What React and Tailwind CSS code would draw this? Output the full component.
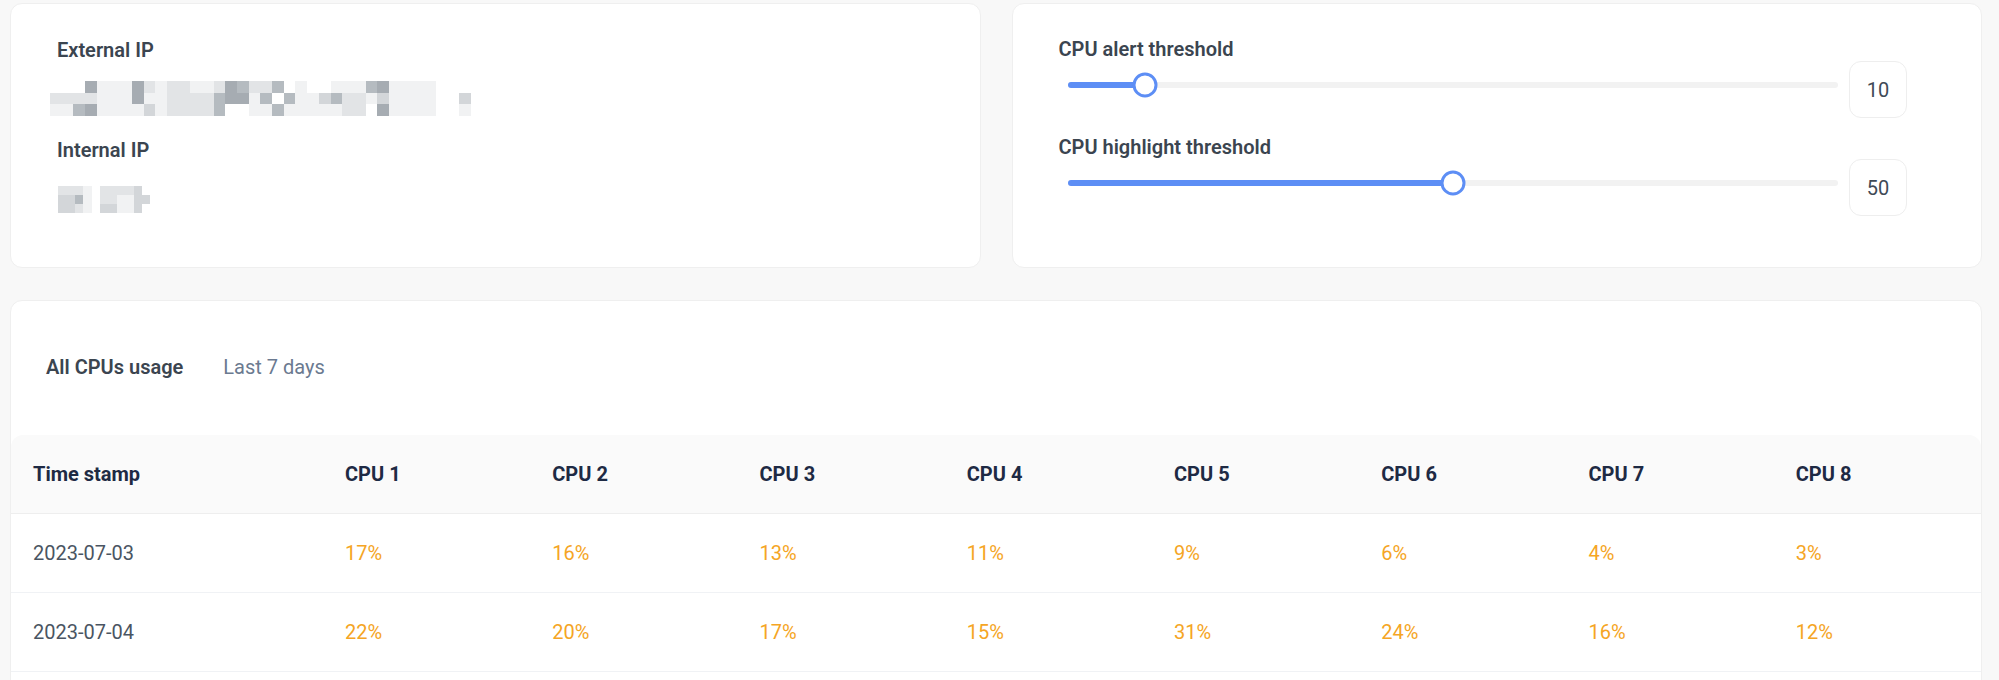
import React from 'react';

const shades = {
  0: 'bg-transparent',
  1: 'bg-[#f1f2f3]',
  2: 'bg-[#e2e4e6]',
  3: 'bg-[#d3d6d9]',
  4: 'bg-[#b5bbc0]',
  5: 'bg-[#a6acb2]',
};

// pixelated (redacted) addresses
const externalMosaic = [
  '000511152122112542240100111451111000',
  '222211151122224551404113422131111003',
  '114511113122224001141111122051111001',
];

const internalMosaic = ['22210222230', '33410221133', '33210331130'];

const rows = [
  { date: '2023-07-03', values: [17, 16, 13, 11, 9, 6, 4, 3] },
  { date: '2023-07-04', values: [22, 20, 17, 15, 31, 24, 16, 12] },
];

function Mosaic({ pattern, cell }) {
  return (
    <div className="flex flex-col">
      {pattern.map((row, r) => (
        <div key={r} className="flex">
          {row.split('').map((c, i) => (
            <div key={i} className={`${cell} ${shades[c]}`} />
          ))}
        </div>
      ))}
    </div>
  );
}

function Slider({ label, value }) {
  return (
    <div>
      <div className="text-[20px] leading-6 font-semibold text-[#3b4550]">{label}</div>
      <div className="flex items-start gap-[11px]">
        <div className="relative flex-1 h-[47px] flex items-center ml-[9px]">
          <div className="w-full h-[6px] rounded-full bg-[#f2f2f2]">
            <div className="h-full rounded-full bg-[#5d8ef5]" style={{ width: `${value}%` }} />
          </div>
          <div
            className="absolute top-1/2 w-[25px] h-[25px] -translate-x-1/2 -translate-y-1/2 rounded-full border-[3px] border-[#5d8ef5] bg-white"
            style={{ left: `${value}%` }}
          />
        </div>
        <div className="w-[58px] h-[57px] rounded-xl border border-[#eeeeee] flex items-center justify-center text-[20px] text-[#3f4a56]">
          {value}
        </div>
      </div>
    </div>
  );
}

export default function App() {
  return (
    <div className="min-h-screen bg-[#f8f8f8] pl-[10px] pr-[17px] pt-[3px] font-['Roboto','Liberation_Sans',sans-serif]">
      <div className="grid grid-cols-2 gap-[31px]">
        {/* connection info */}
        <div className="h-[265px] bg-white rounded-xl border border-[#efefef] pl-[46px] pt-[32px]">
          <div className="text-[20px] leading-7 font-semibold text-[#3b4550]">External IP</div>
          <div className="mt-[17px] -ml-[7px]">
            <Mosaic pattern={externalMosaic} cell="w-[11.7px] h-[11.7px]" />
          </div>
          <div className="mt-[20px] text-[20px] leading-7 font-semibold text-[#3b4550]">Internal IP</div>
          <div className="mt-[22px] ml-[1px]">
            <Mosaic pattern={internalMosaic} cell="w-[8.4px] h-[9px]" />
          </div>
        </div>

        {/* thresholds */}
        <div className="h-[265px] bg-white rounded-xl border border-[#efefef] pl-[46px] pr-[74px] pt-[33px] flex flex-col gap-[17px]">
          <Slider label="CPU alert threshold" value={10} />
          <Slider label="CPU highlight threshold" value={50} />
        </div>
      </div>

      {/* usage table */}
      <div className="mt-[32px] bg-white rounded-xl border border-[#efefef] pb-[40px]">
        <div className="flex items-center gap-[40px] pl-[35px] pt-[52px] pb-[54px] text-[20px] leading-7">
          <span className="font-semibold text-[#3b4550]">All CPUs usage</span>
          <span className="text-[#6b7a90]">Last 7 days</span>
        </div>
        <table className="w-full table-fixed border-collapse">
          <colgroup>
            <col className="w-[312px]" />
            {[1, 2, 3, 4, 5, 6, 7, 8].map((n) => (
              <col key={n} />
            ))}
          </colgroup>
          <thead>
            <tr className="bg-[#fafafa] h-[78px] border-b border-[#eeeeee] text-left text-[20px] text-[#1e2a44]">
              <th className="pl-[22px] font-bold rounded-tl-xl">Time stamp</th>
              {[1, 2, 3, 4, 5, 6, 7, 8].map((n, i) => (
                <th key={n} className={`pl-[22px] font-bold ${i === 7 ? 'rounded-tr-xl' : ''}`}>
                  CPU {n}
                </th>
              ))}
            </tr>
          </thead>
          <tbody>
            {rows.map((row) => (
              <tr key={row.date} className="h-[79px] border-b border-[#f0f2f5] text-[20px]">
                <td className="pl-[22px] text-[#4a5562]">{row.date}</td>
                {row.values.map((v, i) => (
                  <td key={i} className="pl-[22px] text-[#f5a524]">
                    {v}%
                  </td>
                ))}
              </tr>
            ))}
          </tbody>
        </table>
      </div>
    </div>
  );
}
